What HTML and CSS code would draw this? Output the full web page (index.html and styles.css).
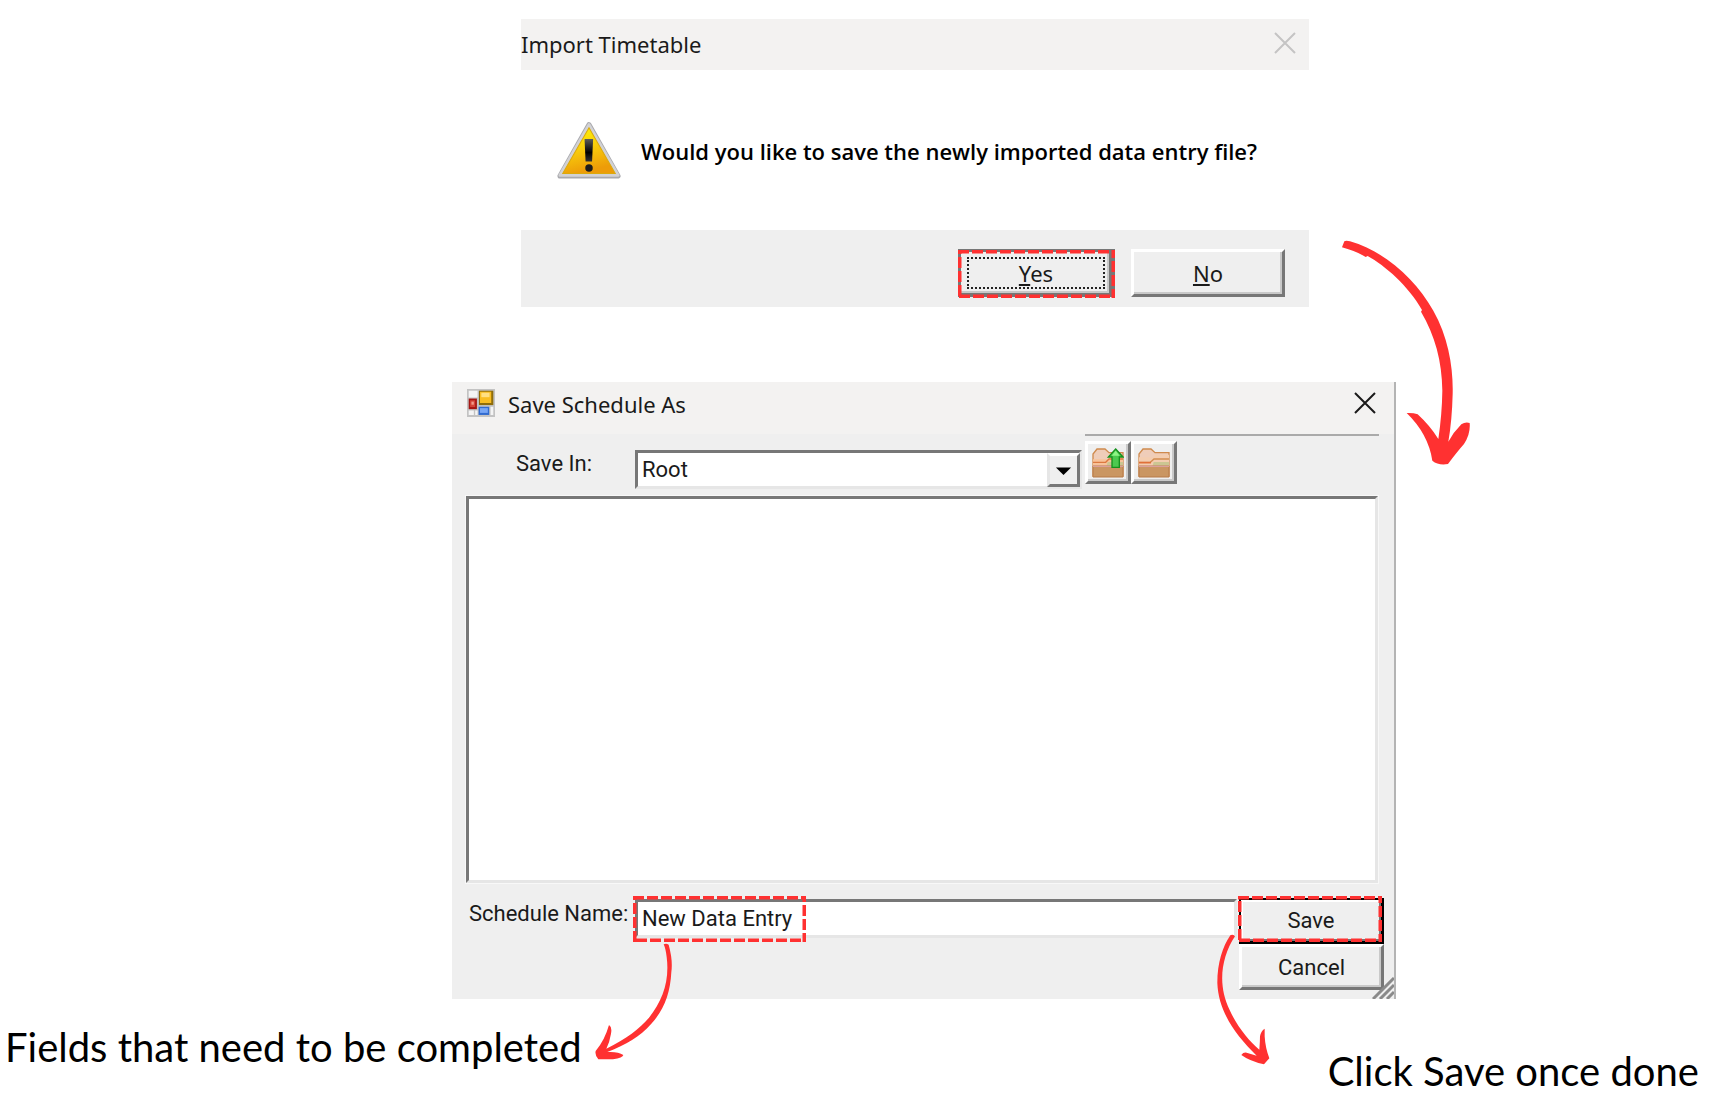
FILE: index.html
```html
<!DOCTYPE html>
<html lang="en">

<head>
    <meta charset="UTF-8">
    <meta name="viewport" content="width=device-width, initial-scale=1.0">
    <title>Import Timetable</title>
    <link rel="stylesheet" href="styles.css">
</head>

<body>
    <main class="guide">
        <section class="dialog import-dialog">
            <header class="title-bar">
                <h1>Import Timetable</h1>
                <button class="close disabled" type="button" aria-label="Close" disabled>
                    <svg viewBox="0 0 20 20"><path d="M0 0L20 20M20 0L0 20" /></svg>
                </button>
            </header>
            <div class="message">
                <svg class="warning" viewBox="0 0 186 170">
                    <defs>
                        <linearGradient id="amber" x1="0" y1="0" x2="0.3" y2="1">
                            <stop offset="0" stop-color="#fff800" />
                            <stop offset="0.5" stop-color="#f9cf0c" />
                            <stop offset="1" stop-color="#ed9c08" />
                        </linearGradient>
                        <linearGradient id="ink" x1="0" y1="0" x2="0" y2="1">
                            <stop offset="0" stop-color="#5b5b58" />
                            <stop offset="0.45" stop-color="#171717" />
                            <stop offset="0.6" stop-color="#000" />
                            <stop offset="1" stop-color="#333" />
                        </linearGradient>
                    </defs>
                    <path d="M93 8L178 158H8Z" fill="#a9a9ae" stroke="#a9a9ae" stroke-width="15" stroke-linejoin="round" />
                    <path d="M93 8L178 156H8Z" fill="#d2d2d5" stroke="#d2d2d5" stroke-width="9" stroke-linejoin="round" />
                    <path d="M93 17L170 151H16Z" fill="url(#amber)" stroke="#dba90c" stroke-width="3" />
                    <path d="M80 50H105L102 116H83Z" fill="url(#ink)" />
                    <circle cx="93" cy="135" r="11" fill="#1d1d1d" />
                </svg>
                <p>Would you like to save the newly imported data entry file?</p>
            </div>
            <footer class="actions">
                <div class="marked">
                    <button class="button default" type="button"><span><u>Y</u>es</span></button>
                    <svg class="highlight"><rect width="100%" height="100%" /></svg>
                </div>
                <button class="button" type="button"><span><u>N</u>o</span></button>
            </footer>
            <svg class="arrow arrow-next" viewBox="60 55 396 684">
                <path d="M66 80L73 62Q78 58 90 62C200 95 285 175 340 270C385 350 400 440 398 520Q396 600 385 663Q400 635 424 611Q436 603 449 607Q452 640 432 670Q410 695 384 730Q355 735 337 720Q325 640 260 577Q280 576 293 581Q330 615 355 655Q366 580 367 510C366 420 345 345 303 273L306 268C265 195 195 135 143 106L137 109Q110 92 66 80Z" />
            </svg>
        </section>

        <form class="dialog save-dialog">
            <header class="title-bar">
                <svg class="app-icon" viewBox="0 0 82 82">
                    <path d="M0 0H82V82H0Z" fill="#c3c3c3" />
                    <path d="M5 5H31V25H5ZM5 63H20V76H5ZM24 63H31V76H24ZM69 52H77V76H69Z" fill="#f4f4f4" />
                    <path d="M35 5H77V47H35Z" fill="#8f6d0a" />
                    <path d="M38 8H71V41H38Z" fill="#f9be22" />
                    <path d="M42 11H66V24H42Z" fill="#ffe083" />
                    <path d="M5 28H29V59H5Z" fill="#a51613" />
                    <path d="M9 33H24V53H9Z" fill="#d54437" />
                    <path d="M13 37H20V46H13Z" fill="#f29b8c" />
                    <path d="M34 52H65V76H34Z" fill="#316bd0" />
                    <path d="M38 56H61V70H38Z" fill="#77a6f5" />
                </svg>
                <h2>Save Schedule As</h2>
                <button class="close" type="button" aria-label="Close">
                    <svg viewBox="0 0 20 20"><path d="M0 0L20 20M20 0L0 20" /></svg>
                </button>
            </header>
            <div class="row location">
                <label class="indent" for="folder">Save In:</label>
                <div class="combo">
                    <select id="folder">
                        <option>Root</option>
                    </select>
                    <svg class="drop" viewBox="0 0 32 32" aria-hidden="true"><path d="M7 13H25L16 22Z" /></svg>
                </div>
                <div class="tools">
                    <button class="button tool" type="button" aria-label="Up one level">
                        <svg viewBox="0 0 94 90">
                            <path d="M2 84V18L14 3H38L50 14H92V84Z" fill="#efcdb9" stroke="#cf8a4d" stroke-width="4" />
                            <path d="M2 34H48L58 26H92V55H2Z" fill="#f8c39a" />
                            <path d="M46 42H92V56H42Z" fill="#cbc692" />
                            <path d="M2 43H40L50 33H92" fill="none" stroke="#dc7940" stroke-width="4" />
                            <path d="M2 54H92V87H2Z" fill="#ca9662" stroke="#b77b48" stroke-width="3" />
                            <path d="M2 55H92" stroke="#dba09a" stroke-width="4" />
                            <path d="M70 3L92 27H81V58H59V27H48Z" fill="#4cc94f" stroke="#15911d" stroke-width="4" />
                            <path d="M70 8L82 23H58Z" fill="#8df585" />
                        </svg>
                    </button>
                    <button class="button tool" type="button" aria-label="New folder">
                        <svg viewBox="0 0 94 90">
                            <path d="M2 84V18L14 3H38L50 14H92V84Z" fill="#efcdb9" stroke="#cf8a4d" stroke-width="4" />
                            <path d="M2 28H44L50 20H92V55H2Z" fill="#f3cdb0" />
                            <path d="M46 42H92V56H42Z" fill="#cbc692" />
                            <path d="M2 43H36L47 33H92" fill="none" stroke="#d38d50" stroke-width="4" />
                            <path d="M2 44H38" stroke="#e07038" stroke-width="5" />
                            <path d="M2 54H92V87H2Z" fill="#ca9662" stroke="#b77b48" stroke-width="3" />
                            <path d="M2 55H92" stroke="#dba09a" stroke-width="4" />
                        </svg>
                    </button>
                </div>
            </div>
            <div class="file-list" role="listbox" aria-label="Schedules"></div>
            <div class="row naming">
                <label for="schedule-name">Schedule Name:</label>
                <div class="field">
                    <input id="schedule-name" type="text" value="New Data Entry">
                    <svg class="highlight"><rect width="100%" height="100%" /></svg>
                    <svg class="arrow arrow-field" viewBox="460 245 240 360">
                        <path d="M672 252Q680 248 687 253Q700 300 695 335C692 400 672 450 635 490C600 530 560 552 503 575Q535 573 551 584Q550 592 520 597L476 597Q465 585 468 572Q495 540 508 494Q518 500 514 520Q510 545 500 565C560 535 600 505 628 472C670 420 690 360 681 290Q678 265 672 252Z" />
                    </svg>
                </div>
                <div class="submit">
                    <div class="marked">
                        <button class="button primary" type="button">Save</button>
                        <svg class="highlight"><rect width="100%" height="100%" /></svg>
                        <svg class="arrow arrow-save" viewBox="75 220 171 402">
                            <path d="M121 227Q128 223 135 230C105 275 92 330 98 380C105 450 160 530 208 570Q210 545 210 530Q213 513 224 507L224 530Q226 565 238 596L222 614Q180 605 154 586Q160 577 170 579Q185 583 200 588C130 520 85 450 82 370C82 310 98 260 121 227Z" />
                        </svg>
                    </div>
                    <button class="button" type="button">Cancel</button>
                </div>
            </div>
            <svg class="grip" viewBox="0 0 22 22"><path d="M1 22L22 1M8 22L22 8M15 22L22 15" /></svg>
        </form>
    </main>

    <div class="captions">
        <p>Fields that need to be completed</p>
        <p class="lower">Click Save once done</p>
    </div>
</body>

</html>
```
FILE: styles.css
```css
* {
    box-sizing: border-box;
}

body {
    margin: 0;
    background: white;
    color: #1a1a1a;
    font-family: Roboto, "Liberation Sans", sans-serif;
    font-size: 22px;
}

h1,
h2,
p {
    margin: 0;
}

button,
input,
select {
    font: inherit;
    color: inherit;
}

.guide {
    padding: 19px 337px 0 452px;
}

.dialog {
    position: relative;
}

.import-dialog {
    margin: 0 87px 75px 69px;
    font-family: "Noto Sans", sans-serif;
}

.title-bar {
    display: flex;
    align-items: flex-start;
    height: 52px;
    background: #f3f2f1;
    font-family: "Noto Sans", sans-serif;
}

.title-bar h1,
.title-bar h2 {
    font-size: 22px;
    font-weight: 400;
    line-height: 44px;
}

.close {
    height: 20px;
    margin-top: 11px;
    margin-left: auto;
    padding: 0;
    border: none;
    background: none;
}

.close svg {
    display: block;
    width: 20px;
    height: 20px;
    overflow: visible;
    stroke: #1a1a1a;
    stroke-width: 2;
}

.close.disabled svg {
    stroke: #c4c4c4;
}

.import-dialog .title-bar {
    height: 51px;
    padding: 3px 14px 0 0;
}

.message {
    display: flex;
    align-items: center;
    gap: 20px;
    height: 160px;
    padding: 2px 0 0 36px;
    color: #000;
    font-family: "Open Sans", sans-serif;
    font-size: 22px;
    font-weight: 600;
}

.warning {
    width: 64px;
    height: 58px;
    overflow: visible;
}

.actions {
    display: flex;
    justify-content: flex-end;
    align-items: flex-start;
    gap: 16px;
    height: 77px;
    padding: 19px 24px 0 0;
    background: #efefef;
}

.button {
    display: block;
    width: 100%;
    height: 46px;
    padding: 0;
    border: 3px solid;
    border-color: #fff #777 #777 #fff;
    border-radius: 0;
    background: #efefef;
    box-shadow: inset -2px -2px #c9c9c9;
}

.button u {
    text-decoration-thickness: 2px;
    text-decoration-skip-ink: none;
    text-underline-offset: 2px;
}

.actions .button {
    width: 154px;
    height: 48px;
}

.marked {
    position: relative;
}

.actions .button.default {
    width: 157px;
    padding: 5px 4px 4px 6px;
    border-width: 3px 6px 4px 3px;
    border-color: #777;
}

.default span {
    display: block;
    border: 2px dotted #222;
    line-height: 28px;
}

.highlight {
    position: absolute;
    top: 0;
    left: 0;
    width: 100%;
    height: 100%;
    fill: none;
    stroke: #ff3131;
    stroke-width: 7;
    stroke-dasharray: 11 3;
    pointer-events: none;
}

.actions .highlight {
    top: 1px;
}

.arrow {
    position: absolute;
    fill: #ff3131;
    pointer-events: none;
    z-index: 1;
}

.arrow-next {
    top: 220px;
    left: calc(100% + 31px);
    width: 132px;
    height: 228px;
}

.save-dialog {
    padding-bottom: 9px;
    border-right: 2px solid #b4b4b4;
    background: #efefef;
}

.save-dialog .title-bar {
    gap: 13px;
    padding: 0 19px 0 15px;
}

.app-icon {
    width: 28px;
    height: 28px;
    margin-top: 7px;
}

.row {
    display: flex;
}

.row label {
    flex: 0 0 183px;
    padding-left: 17px;
}

.row .indent {
    padding-left: 64px;
}

.location {
    height: 62px;
    padding-right: 15px;
}

.location label {
    padding-top: 17px;
}

.combo {
    position: relative;
    flex: 1;
    height: 40px;
    margin-top: 16px;
    margin-right: 3px;
}

.combo select,
.field input {
    display: block;
    width: 100%;
    height: 39px;
    padding: 0 4px;
    border: 3px solid;
    border-color: #777 #e6e6e6 #e6e6e6 #777;
    border-radius: 0;
    background: #fff;
    appearance: none;
}

.drop {
    position: absolute;
    top: 3px;
    right: 2px;
    width: 33px;
    height: 34px;
    border: 3px solid;
    border-color: #fff #777 #777 #e6e6e6;
    background: #efefef;
    overflow: visible;
    pointer-events: none;
}

.tools {
    display: flex;
    align-items: flex-start;
    flex: 0 0 294px;
    padding-top: 5px;
    border-top: 2px solid #aaa;
}

.button.tool {
    width: 46px;
    height: 43px;
    padding: 0 4px;
}

.tool svg {
    display: block;
    width: 32px;
    height: 30px;
}

.file-list {
    height: 387px;
    margin: 0 16px 15px 14px;
    border: 3px solid;
    border-color: #777 #e6e6e6 #e6e6e6 #777;
    outline: 1px solid #f8f8f8;
    background: #fff;
}

.naming {
    padding-right: 10px;
}

.naming label {
    padding-top: 3px;
}

.field {
    position: relative;
    flex: 1;
    margin-right: 2px;
    padding-top: 1px;
}

.field .highlight {
    top: -2px;
    left: -2px;
    width: 173px;
    height: 46px;
}

.arrow-field {
    top: 44px;
    left: -42px;
    width: 80px;
    height: 120px;
}

.submit {
    width: 145px;
}

.submit .button.primary {
    border-width: 2px 3px 3px 2px;
    border-color: #000;
    box-shadow: inset 2px 2px #fff, inset -2px -2px #777;
}

.submit .highlight {
    top: -2px;
    left: -1px;
    width: 144px;
    height: 46px;
}

.arrow-save {
    top: 35px;
    left: -24px;
    width: 57px;
    height: 134px;
}

.grip {
    position: absolute;
    right: 0;
    bottom: 0;
    width: 22px;
    height: 22px;
    stroke: #8a8a8a;
    stroke-width: 3;
}

.captions {
    display: flex;
    justify-content: space-between;
    padding: 24px 34px 0 5px;
    color: #000;
    font-family: Lato, sans-serif;
    font-size: 40px;
    line-height: 48px;
}

.captions .lower {
    padding-top: 24px;
}
```
